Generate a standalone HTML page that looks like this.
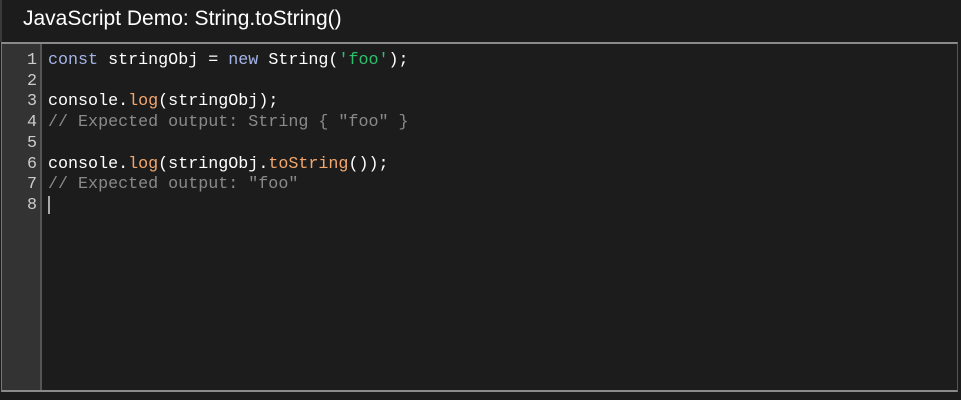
<!DOCTYPE html>
<html><head><style>
html,body{margin:0;padding:0;background:#1c1c1c;width:961px;height:400px;overflow:hidden}
.hdr{position:absolute;left:0;top:0;width:961px;height:42px;background:#1c1c1c;border-left:2px solid #3a3a3a;box-sizing:border-box}
.hdr span{position:absolute;left:21px;top:7px;font:21px "Liberation Sans",sans-serif;color:#fff}
.ed{position:absolute;left:1px;top:42px;width:957px;height:350px;border-top:2px solid #8a8a8a;border-left:1px solid #777;border-right:1px solid #555;border-bottom:2px solid #8a8a8a;box-sizing:border-box;background:#1c1c1c}
.gut{position:absolute;left:0;top:0;width:38px;height:100%;background:#333;border-right:2px solid #555}
.ln{position:absolute;left:0;width:35px;text-align:right;color:#ccc}
.code{position:absolute;left:46px;color:#fff;white-space:pre}
.ln,.code{font:16.7px "Liberation Mono",monospace;line-height:20.7px}
.k{color:#a5b4e8}.s{color:#2bc06a}.f{color:#f4a66b}.c{color:#8a8a8a}
.cur{position:absolute;left:46px;top:152px;width:2px;height:18px;background:#aaa}
</style></head><body>
<div class="hdr"><span>JavaScript Demo: String.toString()</span></div>
<div class="ed">
<div class="gut"></div>
<div class="ln" style="top:7px">1<br>2<br>3<br>4<br>5<br>6<br>7<br>8</div>
<div class="code" style="top:7px"><span class="k">const</span> stringObj = <span class="k">new</span> String(<span class="s">'foo'</span>);

console.<span class="f">log</span>(stringObj);
<span class="c">// Expected output: String { "foo" }</span>

console.<span class="f">log</span>(stringObj.<span class="f">toString</span>());
<span class="c">// Expected output: "foo"</span>
</div>
<div class="cur"></div>
</div>
</body></html>
